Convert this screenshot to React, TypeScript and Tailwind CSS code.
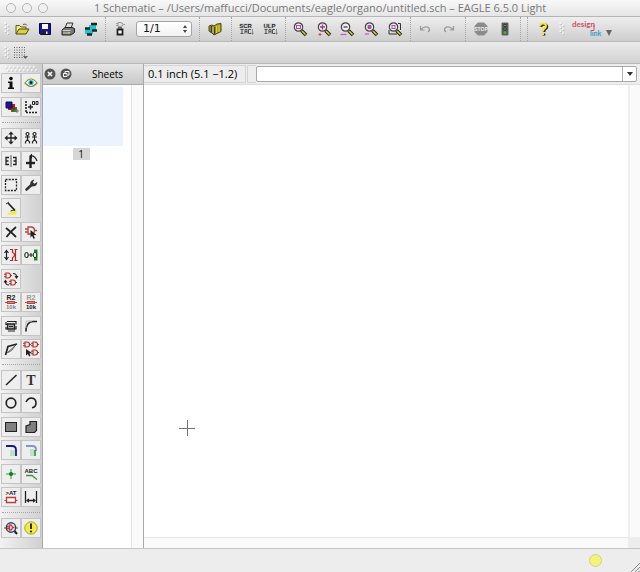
import React, { ReactNode } from 'react';

interface IconProps {
  children: ReactNode;
  size?: string;
  box?: string;
}

function Icon({ children, size = 'h-4 w-4', box = '0 0 16 16' }: IconProps) {
  return (
    <svg viewBox={box} className={`${size} shrink-0`} fill="none" stroke="#222" aria-hidden="true">
      {children}
    </svg>
  );
}

function IconText({ x, y, size, color = '#222', children }: { x: number; y: number; size: number; color?: string; children: string }) {
  return (
    <text x={x} y={y} fontSize={size} fill={color} stroke="none" fontWeight="bold" textAnchor="middle" fontFamily="Liberation Sans, sans-serif">
      {children}
    </text>
  );
}

function Separator({ width = 'w-[6px]' }: { width?: string }) {
  return (
    <div className={`${width} flex h-full shrink-0 justify-center`}>
      <div className="h-full border-l border-dotted border-[#a5a5a5]" />
    </div>
  );
}

function Grip() {
  return (
    <svg viewBox="0 0 6 14" className="h-[14px] w-[6px] shrink-0" aria-hidden="true">
      {[1, 5, 9].map((y) => (
        <g key={y}>
          <path d={`M1.500 ${y + 0.5}h1.500v1.500h-1.500zM4 ${y + 2.5}h1.500v1.500h-1.500z`} fill="#bdbdbd" />
          <path d={`M.500 ${y - 0.5}h1.500v1.500h-1.500zM3 ${y + 1.5}h1.500v1.500h-1.500z`} fill="#fafafa" />
        </g>
      ))}
    </svg>
  );
}

function BarButton({ label, children }: { label: string; children: ReactNode }) {
  return (
    <button type="button" aria-label={label} className="flex h-5 items-center justify-center">
      {children}
    </button>
  );
}

function Magnifier({ children }: { children?: ReactNode }) {
  return (
    <Icon>
      <path d="M9.500 9.500l4.500 4.500" stroke="#222" strokeWidth="3.600" />
      <path d="M10 10l3.500 3.500" stroke="#d8cf28" strokeWidth="1.600" />
      <circle cx="6.500" cy="6" r="4.200" fill="#f1ecf3" stroke="#444" strokeWidth="1.200" />
      {children}
    </Icon>
  );
}

// part symbol used by several of the editing tools
function Gate({ x = 0, y = 0, color = '#b22a24' }: { x?: number; y?: number; color?: string }) {
  return (
    <g transform={`translate(${x} ${y})`} stroke={color} strokeWidth="1.1">
      <path d="M2 1h2q2.5 0 2.5 2.5T4 6H2zM0 2.2h2M0 4.8h2M6.5 3.5H8" />
    </g>
  );
}

interface Tool {
  label: string;
  icon: ReactNode;
}

const displayTools: Tool[] = [
  {
    label: 'Info',
    icon: (
      <Icon>
        <circle cx="8" cy="3.6" r="1.8" fill="#111" stroke="none" />
        <path d="M5 6.5h4.5v6H11V14H5v-1.5h1.5V8H5z" fill="#111" stroke="none" />
      </Icon>
    ),
  },
  {
    label: 'Show',
    icon: (
      <Icon>
        <path d="M2 8q6-8 12 0q-6 7-12 0z" fill="#fff" stroke="#8f8d2a" strokeWidth="1.2" />
        <circle cx="8" cy="7.6" r="2.6" fill="#19c5cf" stroke="none" />
        <circle cx="8" cy="7.6" r="1.3" fill="#111" stroke="none" />
      </Icon>
    ),
  },
  {
    label: 'Display',
    icon: (
      <Icon>
        <path d="M8 8h6v5H8z" fill="#178a2a" stroke="none" />
        <path d="M5 5h7v6H5z" fill="#b01c1c" stroke="none" />
        <path d="M3 3h6v6H3z" fill="#17178f" stroke="#0c0c60" />
        <path d="M14 10v4M12 12h4" stroke="#777" />
      </Icon>
    ),
  },
  {
    label: 'Mark',
    icon: (
      <Icon>
        <path d="M3 2v12M3 13.5h11" strokeWidth="1.6" strokeDasharray="2 1" />
        <path d="M7.500 5.500v5M5 8h5" strokeWidth="1.400" />
        <path d="M9.500 2.500h2v3h-2zM13 2.500h2v3h-2z" />
      </Icon>
    ),
  },
];

const editTools: (Tool | null)[] = [
  {
    label: 'Move',
    icon: (
      <Icon>
        <path d="M8 3v10M3 8h10" strokeWidth="1.3" />
        <path d="M8 1.5l2.7 3H5.300zM8 14.500l2.700-3H5.300zM1.500 8l3-2.700v5.400zM14.500 8l-3-2.700v5.400z" fill="#222" stroke="none" />
      </Icon>
    ),
  },
  {
    label: 'Copy',
    icon: (
      <Icon>
        {[4.5, 11.5].map((x) => (
          <g key={x} transform={`translate(${x} 0)`}>
            <circle cx="0" cy="4" r="1.500" strokeWidth="1.200" />
            <path d="M0 5.500v4M-2.500 7h5M-2 13.500V12L0 9.500 2 12v1.500" strokeWidth="1.200" />
          </g>
        ))}
      </Icon>
    ),
  },
  {
    label: 'Mirror',
    icon: (
      <Icon>
        <path d="M8 2v12" stroke="#555" />
        <path d="M6 4.500H3v7h3M3 8h2.500M10 4.500h3v7h-3M13 8h-2.500" strokeWidth="1.300" />
      </Icon>
    ),
  },
  {
    label: 'Rotate',
    icon: (
      <Icon>
        <path d="M7.500 4v11" strokeWidth="2.400" />
        <path d="M3 10h9" strokeWidth="2.400" />
        <path d="M7 3q5-1 7 5" strokeWidth="1.200" />
        <path d="M6 3.200l3-2.700v5z" fill="#222" stroke="none" />
      </Icon>
    ),
  },
  {
    label: 'Group',
    icon: (
      <Icon>
        <rect x="2.500" y="2.500" width="11" height="11" strokeDasharray="2 1.200" strokeWidth="1.300" />
      </Icon>
    ),
  },
  {
    label: 'Change',
    icon: (
      <Icon>
        <path d="M3.500 12.500l5.500-5" stroke="#333" strokeWidth="2.600" strokeLinecap="round" />
        <path d="M8 9.500L7.200 6Q8 3 11.500 2.500L9.800 5.300l1.500 1.400 3-1.700q0 3.500-3 4.300z" fill="#333" stroke="none" />
      </Icon>
    ),
  },
  {
    label: 'Cut',
    icon: (
      <Icon>
        <path d="M10 10l4 1.500-1 3H4l2-2h3z" fill="#f3ec26" stroke="none" />
        <path d="M5 3l7 7.500" strokeWidth="1.800" />
        <path d="M3 4l3-2M11 10l-3.500 1" stroke="#333" />
      </Icon>
    ),
  },
  null,
  {
    label: 'Delete',
    icon: (
      <Icon>
        <path d="M3 4q4 3 10 9M13 3Q7 8 3.500 13" strokeWidth="1.800" />
      </Icon>
    ),
  },
  {
    label: 'Add',
    icon: (
      <Icon>
        <path d="M5 3h3q3.500 0 3.500 3.500T8 10H5zM2 5h3M2 8h3M11.500 6.500h2.500" stroke="#b8443b" strokeWidth="1.300" />
        <path d="M7.500 6l6 5-3 .2 1.500 3-1.500.6-1.500-3-1.500 2z" fill="#222" stroke="none" />
      </Icon>
    ),
  },
  {
    label: 'Pinswap',
    icon: (
      <Icon>
        <path d="M3.500 4v8M1.500 6l2-2.500 2 2.500M1.500 10l2 2.500 2-2.500" strokeWidth="1.200" />
        <path d="M7 2.500h2.500v3q2 .500 2 2.500t-2 2.500v3H7M14.500 2.500h-3M14.500 13.500h-3M12.500 3v10" stroke="#b22a24" strokeWidth="1.200" />
      </Icon>
    ),
  },
  {
    label: 'Replace',
    icon: (
      <Icon>
        <path d="M11 2.500h3.500v11H11z" fill="#158c24" stroke="none" />
        <ellipse cx="3.500" cy="8" rx="1.700" ry="2.500" fill="#fff" stroke="#1a4221" strokeWidth="1.200" />
        <path d="M5.500 8h5M8 6v4" stroke="#333" strokeWidth="1.200" />
        <ellipse cx="12" cy="8" rx="1.700" ry="2.700" fill="#fff" stroke="#1a4221" />
      </Icon>
    ),
  },
  {
    label: 'Gateswap',
    icon: (
      <Icon>
        <Gate x={1} y={1} />
        <Gate x={6} y={8} />
        <path d="M10 2.500q4 0 3.500 4M12 5l1.500 2L15 5M6 14q-4 0-3.500-4M1 11.500l1.500-2 1.500 2" strokeWidth="1.100" />
      </Icon>
    ),
  },
  null,
  {
    label: 'Name',
    icon: (
      <Icon>
        <IconText x={8} y={6} size={7}>R2</IconText>
        <path d="M2 8.500h12" stroke="#b8443b" />
        <rect x="4.500" y="7.500" width="7" height="2" fill="#d88" stroke="#b8443b" />
        <IconText x={8} y={15} size={6} color="#888">10k</IconText>
      </Icon>
    ),
  },
  {
    label: 'Value',
    icon: (
      <Icon>
        <IconText x={8} y={6} size={7} color="#999">R2</IconText>
        <path d="M2 8.500h12" stroke="#b8443b" />
        <rect x="4.500" y="7.500" width="7" height="2" fill="#d88" stroke="#b8443b" />
        <IconText x={8} y={15} size={6}>10k</IconText>
      </Icon>
    ),
  },
  {
    label: 'Smash',
    icon: (
      <Icon>
        <path d="M4.500 6h7v5h-7z" fill="#aaa" strokeWidth="1.300" />
        <path d="M4 3.500h9v3M3 4v2.500h1.500M3 9v2h1.500M5 13h7M13 8v3h-1.500M6 8.500h4" strokeWidth="1.200" />
      </Icon>
    ),
  },
  {
    label: 'Miter',
    icon: (
      <Icon>
        <path d="M3 13.500V11Q4 4 10 3.500h4" strokeWidth="1.600" />
        <path d="M3 10V3h6" stroke="#bbb" />
      </Icon>
    ),
  },
  {
    label: 'Split',
    icon: (
      <Icon>
        <path d="M2.500 14L5 5.500 14 3" strokeWidth="1.700" />
        <path d="M3 13L13.500 3.500" stroke="#555" />
        <path d="M5 11.500q4-1 6.500-6" stroke="#666" />
      </Icon>
    ),
  },
  {
    label: 'Invoke',
    icon: (
      <Icon>
        <Gate x={0} y={0} />
        <Gate x={8} y={0} />
        <Gate x={8} y={8} />
        <path d="M3 8l6 4-2.500.4 1 2.600-1.400.5-1.200-2.500L3 14.500z" fill="#222" stroke="none" />
      </Icon>
    ),
  },
];

const drawTools: Tool[] = [
  { label: 'Wire', icon: <Icon><path d="M3 13L13.500 3" strokeWidth="1.500" /></Icon> },
  {
    label: 'Text',
    icon: (
      <Icon>
        <text x="8" y="13" fontSize="14" fontWeight="bold" fill="#333" stroke="none" textAnchor="middle" fontFamily="Liberation Serif, serif">T</text>
      </Icon>
    ),
  },
  { label: 'Circle', icon: <Icon><circle cx="8" cy="8" r="4.800" strokeWidth="1.700" /></Icon> },
  { label: 'Arc', icon: <Icon><path d="M3 7Q5 3 8.500 3q4.500.5 4.500 5 0 4-4 4.800" strokeWidth="1.600" /></Icon> },
  { label: 'Rect', icon: <Icon><rect x="2.500" y="3.500" width="11" height="9" fill="#808080" /></Icon> },
  { label: 'Polygon', icon: <Icon><path d="M3 13.500V7l4-1.500V2.500h6.500v9l-2 2z" fill="#808080" strokeWidth="1.200" /></Icon> },
  {
    label: 'Bus',
    icon: (
      <Icon>
        <path d="M7 8h5v6H7z" fill="#b9e5c4" stroke="none" />
        <path d="M3 4h6q4 0 4 4v6" stroke="#171b86" strokeWidth="1.800" />
      </Icon>
    ),
  },
  {
    label: 'Net',
    icon: (
      <Icon>
        <path d="M3 4h6q4 0 4 3v2" stroke="#8b91cf" strokeWidth="1.800" />
        <path d="M7 7h4v7H7z" fill="#b9e5c4" stroke="none" />
        <path d="M12 8v6" stroke="#168a32" strokeWidth="1.500" />
      </Icon>
    ),
  },
  {
    label: 'Junction',
    icon: (
      <Icon>
        <path d="M8 3v10M3 8h10" stroke="#2e9c42" />
        <circle cx="8" cy="8" r="2" fill="#087d20" stroke="none" />
      </Icon>
    ),
  },
  {
    label: 'Label',
    icon: (
      <Icon>
        <IconText x={8} y={7} size={6}>ABC</IconText>
        <path d="M3 9.500h6l5 4" stroke="#2e9c42" strokeWidth="1.300" />
      </Icon>
    ),
  },
  {
    label: 'Attribute',
    icon: (
      <Icon>
        <IconText x={8} y={6} size={6}>&gt;AT</IconText>
        <path d="M3.500 8.500h9v5h-9z" fill="#fff" stroke="#bd3d35" strokeWidth="1.300" />
        <path d="M1.500 11.500h2M12.500 11.500h2" stroke="#bd3d35" />
      </Icon>
    ),
  },
  {
    label: 'Dimension',
    icon: (
      <Icon>
        <path d="M2.500 2v12M13.500 2v12M4 11.500h8" strokeWidth="1.300" />
        <path d="M3 11.500l3-2.300v4.600zM13 11.500l-3-2.300v4.600z" fill="#222" stroke="none" />
      </Icon>
    ),
  },
];

const checkTools: Tool[] = [
  {
    label: 'ERC',
    icon: (
      <Icon>
        <path d="M1 8h14" stroke="#178a2a" />
        <path d="M11 10.500l3 3.500" strokeWidth="2" />
        <circle cx="8" cy="7.500" r="4.700" fill="#e8e8f2" stroke="#394264" strokeWidth="1.400" />
        <path d="M6.500 5h1.500q3 2.500 0 5H6.500zM4 6.500h2.500M4 8.500h2.500M9.500 7.500h2" stroke="#c43b38" strokeWidth="1.300" />
      </Icon>
    ),
  },
  {
    label: 'Errors',
    icon: (
      <Icon>
        <circle cx="8" cy="8" r="6.200" fill="#f2ee38" stroke="#a5a23a" />
        <path d="M8 3.500V9" strokeWidth="1.900" />
        <circle cx="8" cy="11.500" r="1.100" fill="#222" stroke="none" />
      </Icon>
    ),
  },
];

function ToolGroup({ tools, height }: { tools: (Tool | null)[]; height: string }) {
  return (
    <div className={`${height} mx-px grid grid-cols-2 content-between`}>
      {tools.map((tool, i) =>
        tool ? (
          <button
            key={tool.label}
            type="button"
            aria-label={tool.label}
            className="flex h-5 items-center justify-center border border-[#c4c4c4] bg-[#eeeeee]"
          >
            {tool.icon}
          </button>
        ) : (
          <span key={i} className="h-5" />
        ),
      )}
    </div>
  );
}

function ToolDivider() {
  return <div className="mx-[2px] my-[5px] h-px border-t border-dotted border-[#a5a5a5]" />;
}

function TitleBar() {
  return (
    <header className="flex h-[17px] items-center border-b border-[#b5b5b5] bg-linear-to-b from-[#f8f8f8] to-[#e6e6e6]">
      <div className="flex gap-[6px] pl-[6px]">
        {['Close', 'Minimize', 'Zoom'].map((label) => (
          <button key={label} type="button" aria-label={label} className="h-[10px] w-[10px] rounded-full border border-[#b4b4b4] bg-[#f1f1f1]" />
        ))}
      </div>
      <h1 className="flex-1 pr-12 text-center font-['Open_Sans',sans-serif] text-[11px] leading-4 whitespace-nowrap text-[#787878]">
        1 Schematic – /Users/maffucci/Documents/eagle/organo/untitled.sch – EAGLE 6.5.0 Light
      </h1>
    </header>
  );
}

function ActionBar() {
  return (
    <div className="flex h-[25px] items-center border-b border-[#b8b8b8] bg-linear-to-b from-[#eeeeee] to-[#cecece] pl-[4px]">
      <Grip />
      <div className="flex w-[92px] shrink-0 justify-around">
        <BarButton label="Open">
          <Icon>
            <path d="M2 13V4.500h3.500L7 6h5v2" fill="#f2ec88" stroke="#5c5717" />
            <path d="M2 13l3-5h10l-3 5z" fill="#ded336" stroke="#4b4714" />
            <path d="M9 3.500q3-1.500 4 1" stroke="#555" />
          </Icon>
        </BarButton>
        <BarButton label="Save">
          <Icon>
            <path d="M2.500 2.500h11v11h-10l-1-1z" fill="#15159c" stroke="#0a0a33" />
            <path d="M5 3h6v5H5z" fill="#f6f6f6" stroke="none" />
            <path d="M5 10h6v3H5z" fill="#222" stroke="none" />
            <path d="M9 10.500h1.500v2.500H9z" fill="#eee" stroke="none" />
          </Icon>
        </BarButton>
        <BarButton label="Print">
          <Icon>
            <path d="M5 7l2-5h6l-2 5z" fill="#ddd" stroke="#333" />
            <path d="M2 9l3-2.500h7l2.500 1v4L11 14H2z" fill="#777" stroke="#222" />
            <path d="M2.500 9.500h8M3 12h7" stroke="#ccc" />
            <path d="M8 11h2v1H8z" fill="#d8cf28" stroke="none" />
          </Icon>
        </BarButton>
        <BarButton label="CAM">
          <Icon>
            <path d="M6 4h7v5H6zM2 8h8v5H2z" fill="#1bc6d0" stroke="none" />
            <path d="M8 3h6M2 7.500h5M9 9.500h5M4 13.500h5" strokeWidth="2.400" />
          </Icon>
        </BarButton>
      </div>
      <Separator />
      <div className="flex w-6 shrink-0 justify-around">
        <BarButton label="Board">
          <Icon>
            <path d="M6 1.500h2q3 0 3 2t-3 2H6zM4 2.500h2M4 4.500h2M11 3.500h2" stroke="#999" />
            <path d="M5.500 8.500h5v5h-5z" fill="#fff" strokeWidth="1.800" />
            <path d="M6 7h4" stroke="#444" strokeWidth="1.500" />
          </Icon>
        </BarButton>
      </div>
      <div className="relative mx-1 h-4 w-14 shrink-0">
        <select
          aria-label="Sheet"
          className="block h-4 w-full appearance-none rounded-[3px] border border-[#a5a5a5] bg-linear-to-b from-white to-[#f2f2f2] pl-[6px] font-['DejaVu_Sans',sans-serif] text-[11px] leading-[14px] text-[#111]"
        >
          <option>1/1</option>
        </select>
        <svg viewBox="0 0 6 10" className="pointer-events-none absolute top-[3px] right-[4px] h-[10px] w-[6px]" fill="#444" aria-hidden="true">
          <path d="M3 1l2 3H1zM3 9l2-3H1z" />
        </svg>
      </div>
      <Separator />
      <div className="flex w-[26px] shrink-0 justify-around">
        <BarButton label="Library">
          <Icon>
            <path d="M2 5l3-1 2 1 3-2 4-.500v8l-4 2-3 1.500-2-2-3-2z" fill="#aaa01d" stroke="#4a460f" />
            <path d="M4.500 5v7M7.500 6v7" stroke="#33336c" strokeWidth="1.500" />
            <path d="M6 6v6M12 4v7M9.500 5v7" stroke="#d8ce2e" strokeWidth="1.200" />
          </Icon>
        </BarButton>
      </div>
      <Separator />
      <div className="flex w-12 shrink-0 justify-around">
        {['SCR', 'ULP'].map((name) => (
          <BarButton key={name} label={name}>
            <Icon>
              <path d="M2 2h11v11H2z" fill="#d6d6d6" stroke="none" />
              <IconText x={7.5} y={7} size={6}>{name}</IconText>
              <path d="M2.500 8.500h3M4 8.500v4M2.500 12.500h3M7 12.500v-4h2v4M7 10.500h2M13 8.500h-2.500v4H13" stroke="#555" />
              <path d="M14.500 8v5M13 11.500l1.500 2 1.500-2" stroke="#888" />
            </Icon>
          </BarButton>
        ))}
      </div>
      <Separator />
      <div className="flex w-[119px] shrink-0 justify-around">
        <BarButton label="Zoom to fit">
          <Magnifier><rect x="4.500" y="4.500" width="4" height="3" stroke="#b04aaa" /></Magnifier>
        </BarButton>
        <BarButton label="Zoom in">
          <Magnifier>
            <path d="M6.500 3.500v5M4 6h5" stroke="#b52a8b" strokeWidth="1.300" />
            <path d="M4 12v3M2.500 13.500h3" stroke="#c94558" />
          </Magnifier>
        </BarButton>
        <BarButton label="Zoom out">
          <Magnifier>
            <path d="M4.500 6h4" stroke="#444" strokeWidth="1.300" />
            <path d="M1.500 13.500h6" stroke="#b66bc0" strokeWidth="1.400" />
          </Magnifier>
        </BarButton>
        <BarButton label="Redraw">
          <Magnifier>
            <path d="M5 4.500h3v3H5z" fill="#b04aaa" stroke="#b04aaa" />
            <path d="M2 12h4v2H2z" fill="#cd83c6" stroke="none" />
          </Magnifier>
        </BarButton>
        <BarButton label="Zoom select">
          <Magnifier>
            <rect x="5" y="4.500" width="3" height="3" stroke="#b04aaa" />
            <path d="M2 9v4h8M11 2.500h2.500V9" stroke="#333" />
          </Magnifier>
        </BarButton>
      </div>
      <Separator />
      <div className="flex w-12 shrink-0 justify-around">
        <BarButton label="Undo">
          <Icon><path d="M3.500 5v4h4M4 8.500q4-4.500 8-1.500 1.500 2-1 4" stroke="#999" strokeWidth="1.200" /></Icon>
        </BarButton>
        <BarButton label="Redo">
          <Icon><path d="M12.500 5v4h-4M12 8.500Q8 4 4 7q-1.500 2 1 4" stroke="#999" strokeWidth="1.200" /></Icon>
        </BarButton>
      </div>
      <Separator width="w-2" />
      <div className="flex w-12 shrink-0 justify-around">
        <BarButton label="Stop">
          <Icon>
            <path d="M5 1.500h6L14.500 5v6L11 14.500H5L1.500 11V5z" fill="#8b8b8b" stroke="none" />
            <IconText x={8} y={10} size={5} color="#eee">STOP</IconText>
          </Icon>
        </BarButton>
        <BarButton label="Go">
          <Icon>
            <path d="M5 2h6v12H5z" fill="#555" stroke="#666" />
            <circle cx="8" cy="4.500" r="1.300" fill="#999" stroke="#333" />
            <circle cx="8" cy="8" r="1.300" fill="#999" stroke="#333" />
            <circle cx="8" cy="11.500" r="1.500" fill="#2fbd35" stroke="none" />
          </Icon>
        </BarButton>
      </div>
      <Separator />
      <Separator width="w-2" />
      <div className="flex w-6 shrink-0 justify-around">
        <BarButton label="Help">
          <Icon>
            <path d="M6 6q0-2.500 2.800-2.500T12 5.800q0 1.400-1.800 2.400Q9 9 9 11M9 12.500v2" stroke="#222" strokeWidth="2.600" />
            <path d="M5 5.500q0-3 3-3T11 5q0 1.500-1.700 2.600Q8 8.500 8 10.500M8 12v2" stroke="#f1e92a" strokeWidth="2" />
          </Icon>
        </BarButton>
      </div>
      <div className="ml-[4px] flex shrink-0 items-center gap-[6px]">
        <Grip />
        <button type="button" aria-label="Design link" className="flex items-center">
          <svg viewBox="0 0 34 20" className="h-5 w-[34px]" fontFamily="Lato, sans-serif" fontWeight="bold" aria-hidden="true">
            <text x="1" y="8" fontSize="8" fill="#cf5069">design</text>
            <text x="19" y="17" fontSize="7" fill="#2f9fc4">link</text>
            <path d="M23 6v5.500h-3" stroke="#cf5069" fill="none" />
          </svg>
          <svg viewBox="0 0 8 8" className="mt-[7px] h-2 w-2" fill="#666" aria-hidden="true">
            <path d="M1 1h6L4 7z" />
          </svg>
        </button>
      </div>
    </div>
  );
}

function ParameterBar() {
  return (
    <div className="flex h-[22px] items-center gap-[3px] border-b border-[#b8b8b8] bg-linear-to-b from-[#ebebeb] to-[#d2d2d2] pl-[4px]">
      <Grip />
      <BarButton label="Grid">
        <Icon>
          {[2.5, 5, 7.5, 10, 12.5].map((y) => (
            <path key={y} d={`M1 ${y}h11`} stroke="#666" strokeDasharray="1 1.500" />
          ))}
          <path d="M10 11h5l-2.500 3z" fill="#666" stroke="none" />
        </Icon>
      </BarButton>
    </div>
  );
}

function SheetsPanel() {
  return (
    <section className="flex w-[101px] shrink-0 flex-col border-r border-[#a9a9a9]">
      <div className="flex h-[21px] items-center border-b border-[#a9a9a9] bg-linear-to-b from-[#e6e6e6] to-[#c9c9c9] pl-px">
        <button type="button" aria-label="Close panel" className="mr-[4px] h-3 w-3">
          <Icon size="h-3 w-3" box="0 0 12 12">
            <circle cx="6" cy="6" r="5.500" fill="#555" stroke="none" />
            <path d="M4 4l4 4M8 4l-4 4" stroke="#fff" strokeWidth="1.700" />
          </Icon>
        </button>
        <button type="button" aria-label="Float panel" className="h-3 w-3">
          <Icon size="h-3 w-3" box="0 0 12 12">
            <circle cx="6" cy="6" r="5.500" fill="#555" stroke="none" />
            <path d="M5 5V3.500h4V7H7.500" stroke="#fff" />
            <path d="M3.500 5.500h3.500v3H3.500z" stroke="#fff" />
          </Icon>
        </button>
        <h2 className="flex-1 text-center font-['Open_Sans',sans-serif] text-[10px] leading-4 text-black">Sheets</h2>
      </div>
      <div className="flex flex-1 bg-white">
        <div className="flex flex-1 flex-col items-start pt-[2px]">
          <button type="button" className="flex w-20 flex-col items-center">
            <span className="h-[59px] w-full bg-[#eaf3fe]" />
            <span className="mt-[2px] mr-1 w-[17px] bg-[#d6d6d6] text-center font-['Open_Sans',sans-serif] text-[10px] leading-3 text-[#111]">1</span>
          </button>
        </div>
        <div className="w-3 border-l border-[#e6e6e6] bg-[#fafafa]" />
      </div>
    </section>
  );
}

function Editor() {
  return (
    <main className="flex min-w-0 flex-1 flex-col">
      <div className="flex h-[21px] items-center border-b border-[#dedede] bg-[#ededed]">
        <label
          htmlFor="command"
          className="h-[18px] w-[102px] shrink-0 border-y border-r border-[#d4d4d4] pl-[4px] font-['Open_Sans',sans-serif] text-[11px] leading-4 whitespace-nowrap text-black"
        >
          0.1 inch (5.1 −1.2)
        </label>
        <div className="ml-px h-[18px] w-[9px] shrink-0 border border-r-0 border-[#d4d4d4]" />
        <div className="mr-[3px] flex h-4 flex-1 rounded-[2px] border border-[#a9a9a9] bg-white">
          <input id="command" type="text" className="min-w-0 flex-1 bg-transparent px-1 text-[11px] outline-none" />
          <button type="button" aria-label="History" className="flex w-[14px] items-center justify-center border-l border-[#b5b5b5]">
            <svg viewBox="0 0 6 4" className="h-1 w-[6px]" fill="#333" aria-hidden="true">
              <path d="M0 0h6L3 4z" />
            </svg>
          </button>
        </div>
      </div>
      <div className="flex flex-1">
        <div className="flex-1 bg-white">
          <svg viewBox="0 0 16 16" className="mt-[335px] ml-[35px] h-4 w-4" stroke="#777" shapeRendering="crispEdges" aria-hidden="true">
            <path d="M8 0v16M0 8h16" />
          </svg>
        </div>
        <div className="w-3 border-l-2 border-[#efefef] bg-[#fafafa]" />
      </div>
      <div className="flex h-[11px] bg-[#ededed]">
        <div className="flex-1 border-t border-[#e6e6e6] bg-[#fafafa]" />
        <div className="w-3" />
      </div>
    </main>
  );
}

export default function App() {
  return (
    <div className="flex min-h-screen flex-col bg-[#ededed]">
      <TitleBar />
      <ActionBar />
      <ParameterBar />
      <div className="flex flex-1 border-b border-[#c4c4c4]">
        <nav aria-label="Tools" className="w-[43px] shrink-0 border-r border-[#a9a9a9] bg-linear-to-r from-[#f2f2f2] to-[#d0d0d0]">
          <svg viewBox="0 0 34 9" className="mx-auto h-[9px] w-[34px]" fill="none" strokeWidth="1.500" aria-hidden="true">
            <path d="M2 4h32M4 7h30" stroke="#c2c2c2" strokeDasharray="1.500 2.500" />
            <path d="M1 3h32M3 6h30" stroke="#fbfbfb" strokeDasharray="1.500 2.500" />
          </svg>
          <ToolGroup tools={displayTools} height="h-11" />
          <ToolDivider />
          <ToolGroup tools={editTools} height="h-[231px]" />
          <ToolDivider />
          <ToolGroup tools={drawTools} height="h-[137px]" />
          <ToolDivider />
          <ToolGroup tools={checkTools} height="h-5" />
        </nav>
        <SheetsPanel />
        <Editor />
      </div>
      <footer className="flex h-[23px] shrink-0 justify-end">
        <span className="mt-[5px] mr-[26px] h-[13px] w-[13px] rounded-full border border-[#d4d08a] bg-[#f5f279]" />
        <svg viewBox="0 0 12 12" className="h-3 w-3 self-end" stroke="#888" aria-hidden="true">
          <path d="M3 12l9-9M7 12l5-5M10.500 12l1.500-1.500" />
        </svg>
      </footer>
    </div>
  );
}
